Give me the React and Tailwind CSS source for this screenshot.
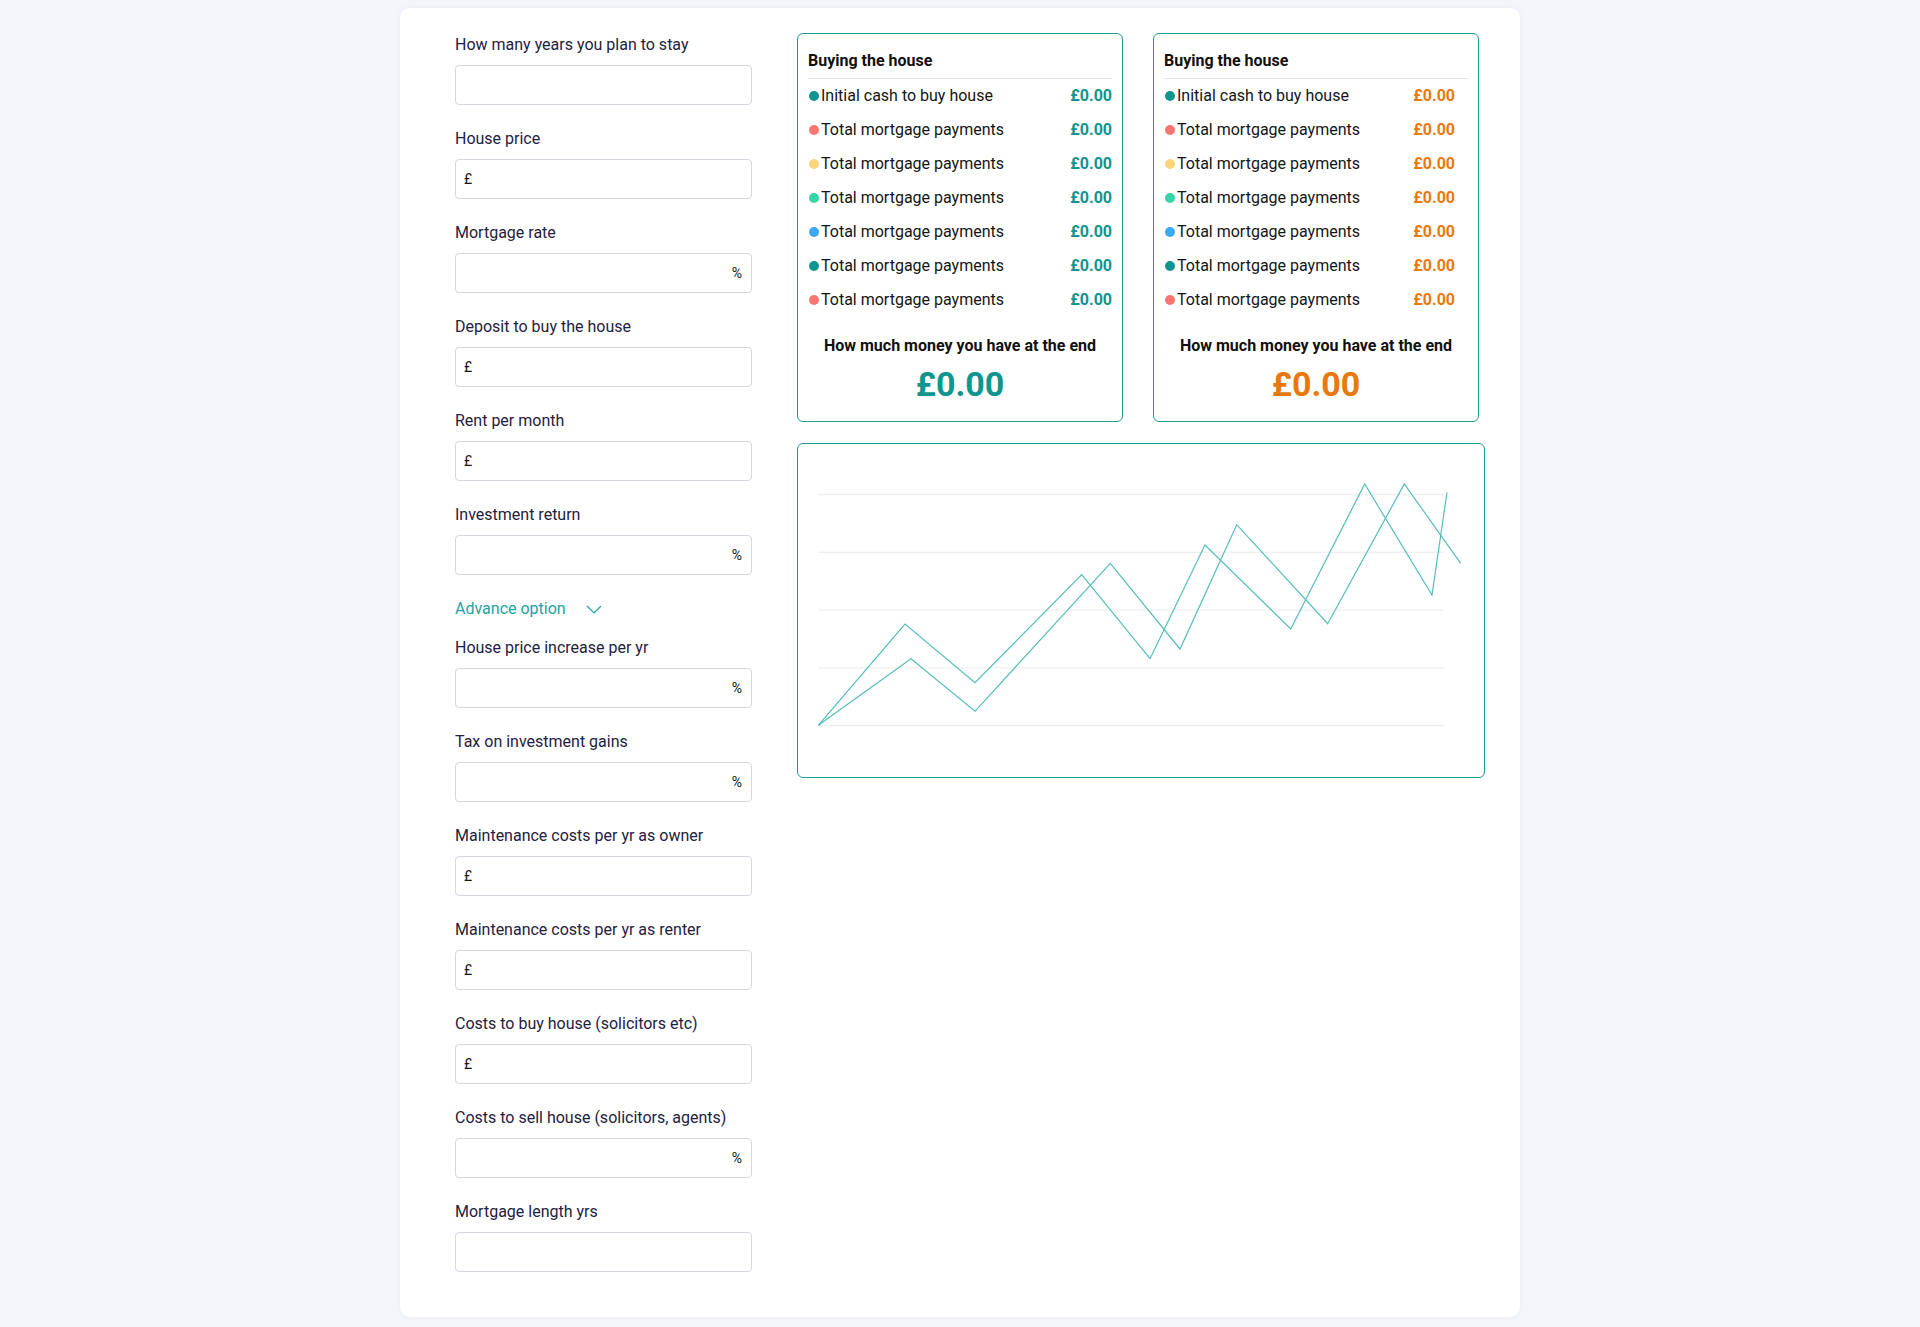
import React from "react";

const basic = [
  { label: "How many years you plan to stay" },
  { label: "House price", prefix: "£" },
  { label: "Mortgage rate", suffix: "%" },
  { label: "Deposit to buy the house", prefix: "£" },
  { label: "Rent per month", prefix: "£" },
  { label: "Investment return", suffix: "%" },
];

const advanced = [
  { label: "House price increase per yr", suffix: "%" },
  { label: "Tax on investment gains", suffix: "%" },
  { label: "Maintenance costs per yr as owner", prefix: "£" },
  { label: "Maintenance costs per yr as renter", prefix: "£" },
  { label: "Costs to buy house (solicitors etc)", prefix: "£" },
  { label: "Costs to sell house (solicitors, agents)", suffix: "%" },
  { label: "Mortgage length yrs" },
];

const rows = [
  { label: "Initial cash to buy house", dot: "bg-[#0e958f]" },
  { label: "Total mortgage payments", dot: "bg-[#fb7670]" },
  { label: "Total mortgage payments", dot: "bg-[#fcd57b]" },
  { label: "Total mortgage payments", dot: "bg-[#36d3a6]" },
  { label: "Total mortgage payments", dot: "bg-[#3aa9f2]" },
  { label: "Total mortgage payments", dot: "bg-[#0e958f]" },
  { label: "Total mortgage payments", dot: "bg-[#fb7670]" },
];

function Field({ label, prefix, suffix }) {
  return (
    <div className="mb-[22px]">
      <label className="block text-base leading-6 text-[#1f2140] mb-2">{label}</label>
      <div className="flex items-center h-10 border border-[#d5d7de] rounded-[4px] bg-white pl-2 pr-[9px] text-sm text-[#151515]">
        {prefix && <span className="mr-1">{prefix}</span>}
        <input className="flex-1 min-w-0 h-full outline-none bg-transparent" />
        {suffix && <span>{suffix}</span>}
      </div>
    </div>
  );
}

function ResultCard({ valueClass, extraPad }) {
  return (
    <div className="w-[326px] border border-[#1a9c98] rounded-[6px] px-[10px] pt-[15px] pb-[17px] bg-white">
      <div className="text-base font-bold leading-6 text-[#111111] pb-[5px] border-b border-[#e3e3e3]">
        Buying the house
      </div>
      <div className="pt-[5px] flex flex-col gap-[10px]">
        {rows.map((r, i) => (
          <div key={i} className={`flex items-center justify-between h-6 ${extraPad ? "pr-[13px]" : ""}`}>
            <div className="flex items-center">
              <span className={`ml-px mr-[2px] w-[10px] h-[10px] rounded-full ${r.dot}`} />
              <span className="text-base leading-6 text-[#151515]">{r.label}</span>
            </div>
            <span className={`text-base leading-6 font-bold ${valueClass}`}>£0.00</span>
          </div>
        ))}
      </div>
      <div className="mt-[22px] text-center text-base leading-6 font-bold text-[#111111]">
        How much money you have at the end
      </div>
      <div className={`mt-[6px] text-center text-[34px] leading-10 font-bold ${valueClass}`}>£0.00</div>
    </div>
  );
}

const lineA = [
  [20.3, 281.3], [107, 180], [177, 238.7], [283.7, 130.7], [352, 214.7], [407, 101], [492.7, 185], [566.7, 40], [634, 151], [649, 48.3],
];
const lineB = [
  [20.3, 281.3], [113, 214.7], [177, 267.3], [312.3, 119.3], [382, 205], [438.7, 80.7], [529.7, 179.7], [606.3, 40], [662.7, 119.3],
];
const toPts = (arr) => arr.map((p) => p.join(",")).join(" ");

function Chart() {
  return (
    <div className="mt-[21px] h-[335px] border border-[#1a9c98] rounded-[6px] bg-white overflow-hidden">
      <svg width="686" height="333" viewBox="0 0 686 333">
        {[50.5, 108.3, 166.1, 223.9, 281.5].map((y) => (
          <line key={y} x1="20.3" x2="646" y1={y} y2={y} stroke="#efefef" strokeWidth="1.4" />
        ))}
        <polyline points={toPts(lineA)} fill="none" stroke="#55bcbc" strokeWidth="1.2" strokeLinejoin="miter" />
        <polyline points={toPts(lineB)} fill="none" stroke="#55bcbc" strokeWidth="1.2" strokeLinejoin="miter" />
      </svg>
    </div>
  );
}

export default function App() {
  return (
    <div className="min-h-screen bg-[#f4f5fa] pt-2 pb-[9px]" style={{ fontFamily: "Roboto, 'Noto Sans', Arial, sans-serif" }}>
      <div className="mx-auto w-[1120px] bg-white rounded-[10px] shadow-[0_0_6px_rgba(30,40,90,0.04)] pl-[55px] pr-[35px] pt-[25px] pb-[23px] flex items-start gap-[45px]">
        <div className="w-[297px] shrink-0">
          {basic.map((f) => (
            <Field key={f.label} {...f} />
          ))}
          <div className="mb-[15px] h-6 flex items-center text-base leading-6 text-[#1ea3a3]">
            <span>Advance option</span>
            <svg className="ml-[20px]" width="16" height="9" viewBox="0 0 16 9">
              <path d="M1 1 L8 8 L15 1" fill="none" stroke="#1ea3a3" strokeWidth="1.2" />
            </svg>
          </div>
          {advanced.map((f) => (
            <Field key={f.label} {...f} />
          ))}
        </div>
        <div className="w-[688px] shrink-0">
          <div className="flex gap-[30px]">
            <ResultCard valueClass="text-[#0e958f]" />
            <ResultCard valueClass="text-[#e8790f]" extraPad />
          </div>
          <Chart />
        </div>
      </div>
    </div>
  );
}
